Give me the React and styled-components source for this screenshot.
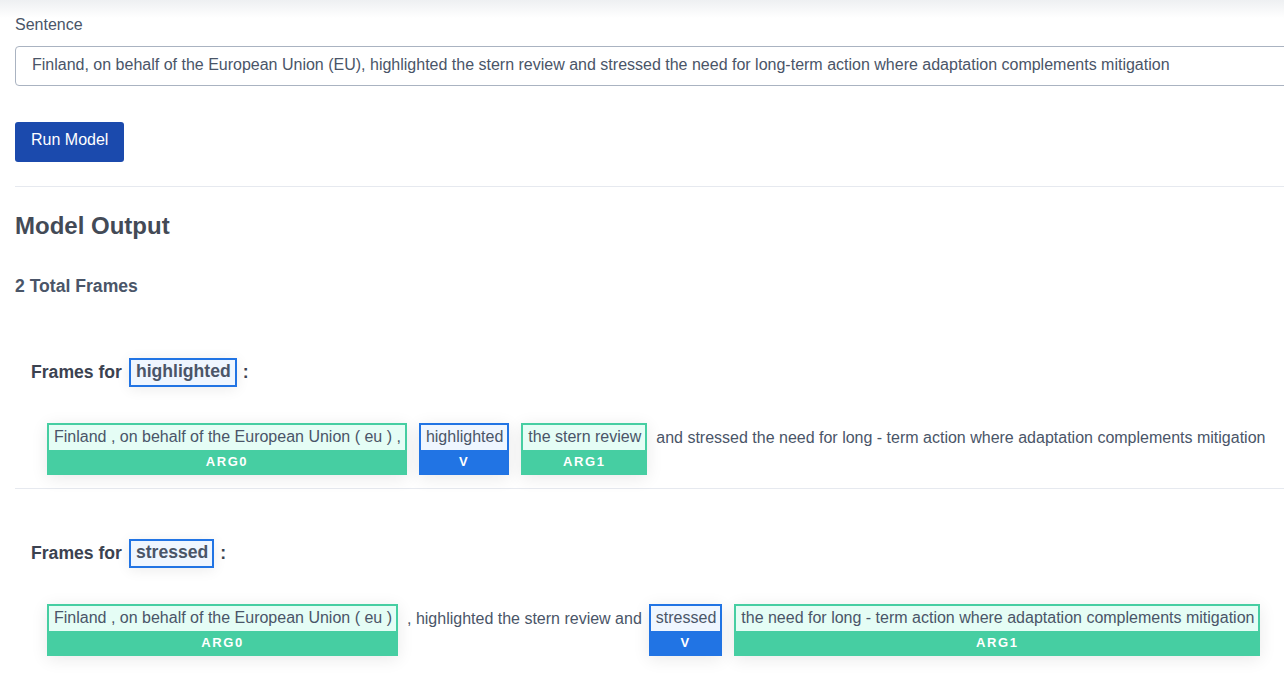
import React from "react"
import styled, { createGlobalStyle } from "styled-components"

const GlobalStyle = createGlobalStyle`
  html, body {
    margin: 0;
    padding: 0;
    background: #fff;
    overflow: hidden;
  }
  body {
    font-family: "Liberation Sans", Arial, sans-serif;
    color: #4a5568;
  }
`

const Page = styled.div`
  position: relative;
  width: 1320px;
  padding: 13px 0 40px 15px;
  box-sizing: border-box;
  &::before {
    content: "";
    position: absolute;
    top: 0;
    left: 0;
    right: 0;
    height: 18px;
    background: linear-gradient(#eef0f2, rgba(255, 255, 255, 0));
  }
`

const Label = styled.div`
  font-size: 16px;
  line-height: 24px;
  color: #4a5568;
`

const SentenceInput = styled.input`
  display: block;
  box-sizing: border-box;
  width: 100%;
  height: 40px;
  margin-top: 9px;
  padding: 0 16px 3px;
  border: 1px solid #aab3c1;
  border-radius: 4px;
  font-family: "Liberation Sans", Arial, sans-serif;
  font-size: 16px;
  color: #4a5568;
  outline: none;
`

const RunButton = styled.button`
  display: block;
  height: 40px;
  margin-top: 36px;
  padding: 0 16px 4px;
  border: none;
  border-radius: 3px;
  background: #1b4aad;
  color: #fff;
  font-family: "Liberation Sans", Arial, sans-serif;
  font-size: 16px;
`

const Divider = styled.hr`
  margin: ${({ $top }) => $top}px 0 0;
  border: none;
  border-top: 1px solid #e6e9ef;
`

const Heading = styled.h2`
  margin: 24px 0 0;
  font-size: 24px;
  line-height: 30px;
  font-weight: 700;
  color: #434a56;
`

const Total = styled.h3`
  margin: 34px 0 0;
  font-size: 17.6px;
  line-height: 22px;
  font-weight: 700;
  color: #4a5568;
`

const Frame = styled.section`
  padding: ${({ $top }) => $top}px 0 0 16px;
`

const FrameTitle = styled.div`
  display: flex;
  align-items: center;
  gap: 6px;
  font-size: 17.6px;
  font-weight: 700;
  color: #3b4250;
`

const VerbBox = styled.span`
  display: inline-block;
  margin-left: 1px;
  padding: 0 4px 2px 5px;
  line-height: 23px;
  border: 2px solid #2174e4;
  background: #eff6ff;
  color: #4a5568;
  box-shadow: 0 2px 14px rgba(0, 0, 0, 0.08);
`

const TokenRow = styled.div`
  display: flex;
  align-items: flex-start;
  margin-top: 36px;
  padding-left: 10px;
  white-space: nowrap;
`

const Token = styled.div`
  display: flex;
  flex-direction: column;
  margin: 0 6px;
  padding: 2px 2px 0;
  background: ${({ $color }) => $color};
  box-shadow: 0 3px 16px rgba(0, 0, 0, 0.09);
`

const TokenText = styled.span`
  padding: 0 4px 2px 5px;
  font-size: 16px;
  line-height: 23px;
  background: ${({ $tint }) => $tint};
  color: #4a5568;
`

const TokenLabel = styled.span`
  height: 25px;
  line-height: 24px;
  text-align: center;
  font-size: 13px;
  font-weight: 700;
  letter-spacing: 1.6px;
  color: #fff;
`

const Plain = styled.span`
  margin: 2px 1px 0 3px;
  font-size: 16px;
  line-height: 25px;
  color: #4a5568;
`

const palette = {
  ARG: { color: "#46cea2", tint: "#e5fdf5" },
  V: { color: "#2174e4", tint: "#eff6ff" },
}

const sentence =
  "Finland, on behalf of the European Union (EU), highlighted the stern review and stressed the need for long-term action where adaptation complements mitigation"

const frames = [
  {
    verb: "highlighted",
    parts: [
      { text: "Finland , on behalf of the European Union ( eu ) ,", tag: "ARG0" },
      { text: "highlighted", tag: "V" },
      { text: "the stern review", tag: "ARG1" },
      { text: "and stressed the need for long - term action where adaptation complements mitigation" },
    ],
  },
  {
    verb: "stressed",
    parts: [
      { text: "Finland , on behalf of the European Union ( eu )", tag: "ARG0" },
      { text: ", highlighted the stern review and" },
      { text: "stressed", tag: "V" },
      { text: "the need for long - term action where adaptation complements mitigation", tag: "ARG1" },
    ],
  },
]

const Part = ({ text, tag }) => {
  if (!tag) return <Plain>{text}</Plain>
  const colors = tag === "V" ? palette.V : palette.ARG
  return (
    <Token $color={colors.color}>
      <TokenText $tint={colors.tint}>{text}</TokenText>
      <TokenLabel>{tag}</TokenLabel>
    </Token>
  )
}

const App = () => (
  <>
    <GlobalStyle />
    <Page>
      <Label>Sentence</Label>
      <SentenceInput defaultValue={sentence} />
      <RunButton>Run Model</RunButton>
      <Divider $top={24} />
      <Heading>Model Output</Heading>
      <Total>2 Total Frames</Total>
      {frames.map((frame, i) => (
        <React.Fragment key={frame.verb}>
          {i > 0 && <Divider $top={13} />}
          <Frame $top={i === 0 ? 61 : 50}>
            <FrameTitle>
              Frames for <VerbBox>{frame.verb}</VerbBox> :
            </FrameTitle>
            <TokenRow>
              {frame.parts.map((p, j) => (
                <Part key={j} {...p} />
              ))}
            </TokenRow>
          </Frame>
        </React.Fragment>
      ))}
    </Page>
  </>
)

export default App
